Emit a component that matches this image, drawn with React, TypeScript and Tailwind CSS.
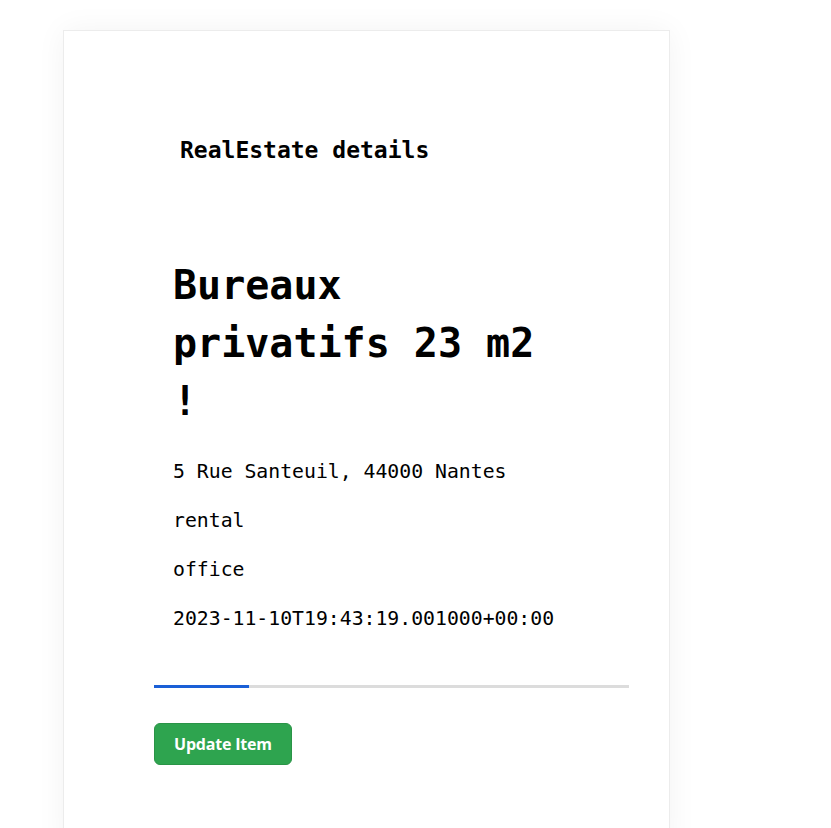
import { useState } from 'react';

interface RealEstate {
  title: string;
  address: string;
  transaction: string;
  category: string;
  createdAt: string;
}

const item: RealEstate = {
  title: 'Bureaux privatifs 23 m2 !',
  address: '5 Rue Santeuil, 44000 Nantes',
  transaction: 'rental',
  category: 'office',
  createdAt: '2023-11-10T19:43:19.001000+00:00',
};

const mono = "font-['DejaVu_Sans_Mono','Liberation_Mono',monospace]";

const App = () => {
  const [progress] = useState(20);

  return (
    <div className="min-h-[828px] bg-white">
      <div className="ml-[63px] pt-[30px] w-[607px]">
        <div className="min-h-[820px] border border-[#ececec] bg-white shadow-[0_0_28px_rgba(0,0,0,0.05)] pl-[90px] pr-[40px] pt-[102px]">
          <h2 className={`${mono} ml-[26px] text-[23px] leading-[34px] font-bold text-black`}>
            RealEstate details
          </h2>

          <div className="pl-[19px] mt-[89px]">
            <h1 className={`${mono} w-[390px] text-[40px] leading-[58px] font-bold text-black`}>
              {item.title}
            </h1>
            <div className={`${mono} mt-[27px] flex flex-col gap-[19px] text-[19.8px] leading-[30px] text-black`}>
              <p>{item.address}</p>
              <p>{item.transaction}</p>
              <p>{item.category}</p>
              <p>{item.createdAt}</p>
            </div>
          </div>

          <div className="mt-[51px] h-[3px] w-full bg-[#dcdcdc]">
            <div className="h-full bg-[#1a5fd6]" style={{ width: `${progress}%` }} />
          </div>

          <button className="mt-[35px] h-[42px] rounded-[6px] border border-[#2a9447] bg-[#2ea44f] px-[19px] font-['Open_Sans',sans-serif] text-[16px] font-bold tracking-[-0.2px] text-white">
            Update Item
          </button>
        </div>
      </div>
    </div>
  );
};

export default App;
